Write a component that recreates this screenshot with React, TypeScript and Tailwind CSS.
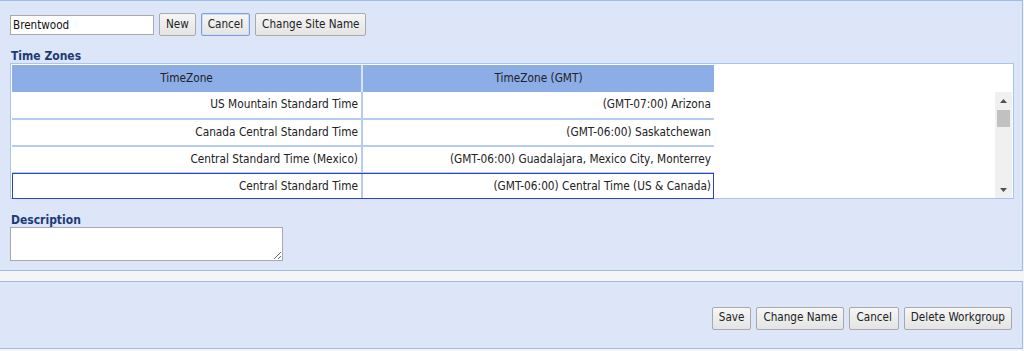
import React from "react";

const rows = [
  ["US Mountain Standard Time", "(GMT-07:00) Arizona"],
  ["Canada Central Standard Time", "(GMT-06:00) Saskatchewan"],
  ["Central Standard Time (Mexico)", "(GMT-06:00) Guadalajara, Mexico City, Monterrey"],
  ["Central Standard Time", "(GMT-06:00) Central Time (US & Canada)"],
];

function Btn({ children, focused }: { children: React.ReactNode; focused?: boolean }) {
  return (
    <button
      className={
        focused
          ? "h-[23px] px-[6px] rounded-[2px] border border-[#7d9fd6] bg-gradient-to-b from-[#f6f6f6] to-[#e4e4e4] text-[11.6px] text-[#222] shadow-[inset_0_0_0_1px_#cfdcf2]"
          : "h-[23px] px-[6px] rounded-[2px] border border-[#a9a9a9] bg-gradient-to-b from-[#f6f6f6] to-[#e4e4e4] text-[11.6px] text-[#222]"
      }
    >
      {children}
    </button>
  );
}

export default function App() {
  return (
    <div className="w-[1024px] h-[351px] bg-[#f5f5f5] font-['DejaVu_Sans_Condensed','DejaVu_Sans',sans-serif] text-[11.75px] text-[#222]">
      <div className="h-[271px] bg-[#dce6f8] border-t border-r border-b border-[#9dbce6] mr-[1px] pl-[10px] pt-[12px]">
        <div className="flex items-center gap-[5px]">
          <input
            defaultValue="Brentwood"
            className="w-[144px] h-[20px] border border-[#a9a9a9] bg-white px-[2px] text-[11.6px] text-[#111] outline-none"
          />
          <Btn>New</Btn>
          <Btn focused>Cancel</Btn>
          <Btn>Change Site Name</Btn>
        </div>
        <div className="mt-[13px] pl-[1px] text-[12px] font-bold text-[#1c3a78] leading-[14px]">Time Zones</div>
        <div className="w-[1004px] h-[136px] border border-[#a9c5ec] bg-white flex">
          <div className="flex-1 pl-[1px] pt-[1px]">
            <table className="border-collapse w-[702px] table-fixed">
              <thead>
                <tr className="h-[27px] bg-[#8cade6]">
                  <th className="w-[350px] font-normal text-center border-r-2 border-[#d8e4f6]">TimeZone</th>
                  <th className="font-normal text-center">TimeZone (GMT)</th>
                </tr>
              </thead>
              <tbody>
                {rows.map((r, i) => {
                  const last = i === rows.length - 1;
                  return (
                    <tr
                      key={i}
                      className={
                        last
                          ? "h-[26px] outline outline-1 -outline-offset-1 outline-[#2a3fd4]"
                          : "h-[27px] border-b-2 border-[#b3ccef]"
                      }
                    >
                      <td className="text-right pr-[3px] border-r-2 border-[#b3ccef] whitespace-nowrap">{r[0]}</td>
                      <td className="text-right pr-[3px] whitespace-nowrap">{r[1]}</td>
                    </tr>
                  );
                })}
              </tbody>
            </table>
          </div>
          <div className="w-[17px] flex flex-col mr-[1px]">
            <div className="h-[28px]" />
            <div className="flex-1 bg-[#f0f0f0] flex flex-col items-center">
              <div className="h-[17px] flex items-center justify-center">
                <svg width="7" height="4" viewBox="0 0 7 4"><path d="M0 4 L3.5 0 L7 4 Z" fill="#505050" /></svg>
              </div>
              <div className="w-[13px] h-[17px] bg-[#c1c1c1] mt-[1px]" />
              <div className="flex-1" />
              <div className="h-[17px] flex items-center justify-center">
                <svg width="7" height="4" viewBox="0 0 7 4"><path d="M0 0 L3.5 4 L7 0 Z" fill="#505050" /></svg>
              </div>
            </div>
          </div>
        </div>
        <div className="mt-[14px] pl-[1px] text-[12px] font-bold text-[#1c3a78] leading-[14px]">Description</div>
        <textarea className="block w-[273px] h-[34px] border border-[#a9a9a9] bg-white outline-none resize-y" />
      </div>
      <div className="h-[10px]" />
      <div className="h-[68px] bg-[#dce6f8] border-t border-r border-b border-[#9dbce6] mr-[1px] flex items-center justify-end gap-[5px] pr-[10px] pt-[6px]">
        <Btn>Save</Btn>
        <Btn>Change Name</Btn>
        <Btn>Cancel</Btn>
        <Btn>Delete Workgroup</Btn>
      </div>
    </div>
  );
}
